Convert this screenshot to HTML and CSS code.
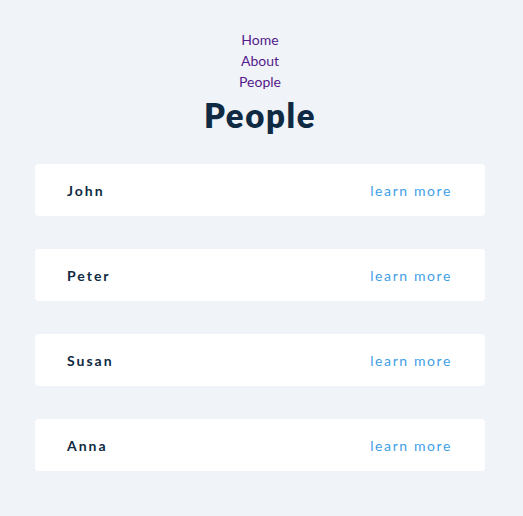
FILE: index.html
```html
<!DOCTYPE html>
<html lang="en">
<head>
<meta charset="utf-8">
<title>People</title>
<link rel="stylesheet" href="styles.css">
</head>
<body>
<div class="page">
  <nav class="nav">
    <a class="nav-link" href="#">Home</a>
    <a class="nav-link" href="#">About</a>
    <a class="nav-link" href="#">People</a>
  </nav>
  <h1 class="title">People</h1>
  <ul class="people">
    <li class="card"><span class="name">John</span><a class="more" href="#">learn more</a></li>
    <li class="card"><span class="name">Peter</span><a class="more" href="#">learn more</a></li>
    <li class="card"><span class="name">Susan</span><a class="more" href="#">learn more</a></li>
    <li class="card"><span class="name">Anna</span><a class="more" href="#">learn more</a></li>
  </ul>
</div>
</body>
</html>
```
FILE: styles.css
```css
html, body {
  margin: 0;
  padding: 0;
  background: #f0f4f8;
}
body {
  font-family: Lato, "Noto Sans", sans-serif;
  color: #102a43;
}
.page {
  padding: 29px 3px 0 0;
  display: flex;
  flex-direction: column;
  align-items: center;
}
.nav {
  display: flex;
  flex-direction: column;
  align-items: center;
}
.nav-link {
  color: #551a8b;
  font-size: 14px;
  line-height: 21px;
  text-decoration: none;
}
.title {
  margin: 3px 0 0;
  font-size: 33px;
  line-height: 40px;
  font-weight: 800;
  letter-spacing: 1.6px;
  color: #102a43;
}
.people {
  list-style: none;
  margin: 29px 0 0;
  padding: 0;
  width: 450px;
  display: flex;
  flex-direction: column;
  gap: 33px;
}
.card {
  background: #ffffff;
  border-radius: 4px;
  height: 52px;
  padding: 0 33px 0 32px;
  box-sizing: border-box;
  display: flex;
  align-items: center;
  justify-content: space-between;
}
.name {
  font-size: 14px;
  font-weight: 700;
  letter-spacing: 2px;
  color: #102a43;
}
.more {
  font-size: 14px;
  font-weight: 400;
  letter-spacing: 1.6px;
  color: #3fa0e6;
  text-decoration: none;
}
```
